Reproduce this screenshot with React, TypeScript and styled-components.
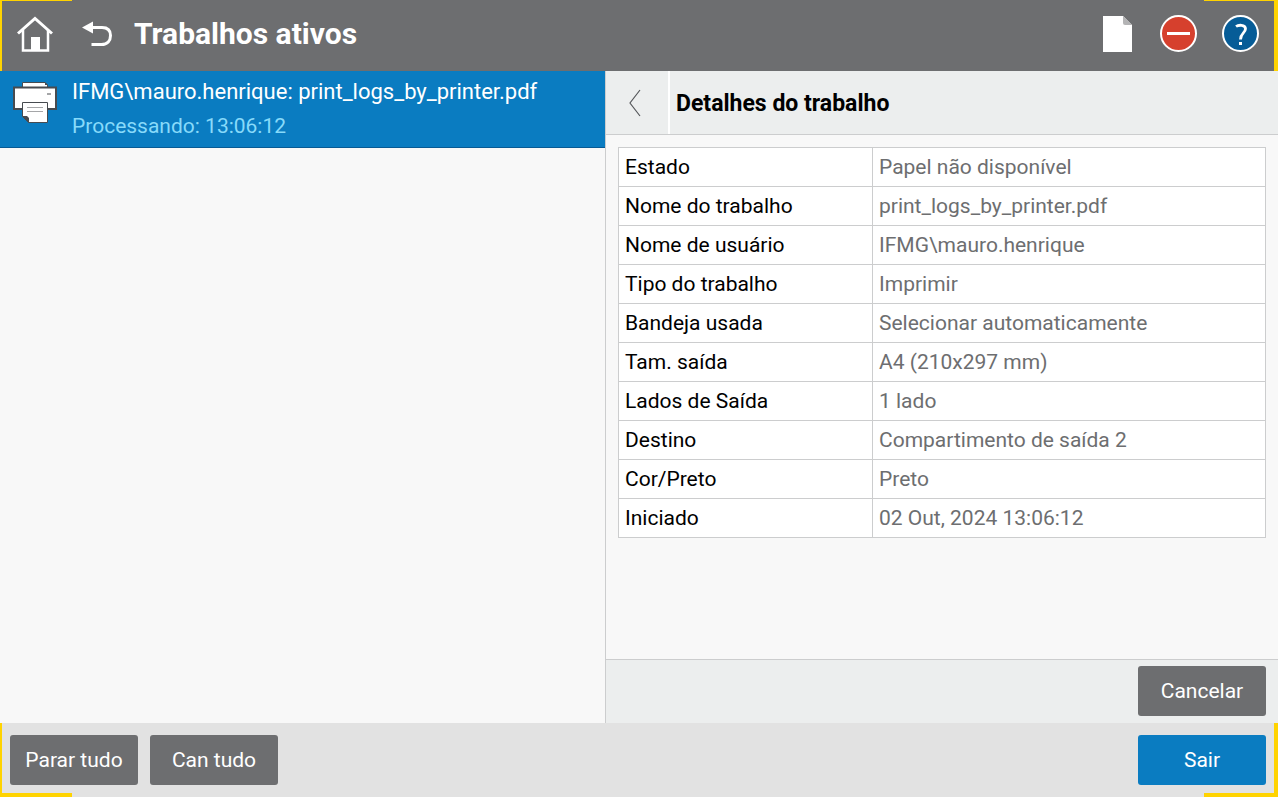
import React from "react";
import styled, { createGlobalStyle } from "styled-components";

const colors = {
  bar: "#6d6e70",
  blue: "#0a7cc1",
  blueDark: "#075a94",
  yellow: "#ffd300",
  panel: "#eceeee",
  page: "#f8f8f8",
  line: "#cccdce",
};

const GlobalStyle = createGlobalStyle`
  * { box-sizing: border-box; }
  body { margin: 0; }
  body, button { font-family: Roboto, "Noto Sans", sans-serif; font-size: 21px; font-weight: 400; }
`;

const Screen = styled.div`
  min-height: 100vh;
  display: flex;
  flex-direction: column;
  background: ${colors.page};
`;

const corner = `linear-gradient(${colors.yellow}, ${colors.yellow})`;

const Header = styled.header`
  display: flex;
  align-items: center;
  height: 71px;
  padding: 0 19px 4px 16px;
  color: #fff;
  background:
    ${corner} left top / 72px 1px no-repeat,
    ${corner} left top / 2px 100% no-repeat,
    ${corner} right top / 74px 1px no-repeat,
    ${corner} right top / 4px 100% no-repeat,
    ${colors.bar};
`;

const IconButton = styled.button<{ $gap?: number }>`
  display: flex;
  padding: 0;
  margin-left: ${(p) => p.$gap ?? 0}px;
  border: 0;
  background: none;
  color: inherit;
  cursor: pointer;
`;

const Title = styled.h1`
  flex: 1;
  margin: 0 0 0 20px;
  font-size: 30px;
  line-height: 40px;
  font-weight: 700;
`;

const Main = styled.main`
  flex: 1;
  display: grid;
  grid-template-columns: minmax(0, 605fr) minmax(0, 673fr);
`;

const JobList = styled.ul`
  margin: 0;
  padding: 0;
  list-style: none;
`;

const JobItem = styled.li`
  display: flex;
  gap: 14px;
  padding: 3px 13px;
  border-bottom: 1px solid ${colors.blueDark};
  background: ${colors.blue};
  color: #fff;
  line-height: 35px;
`;

const JobIcon = styled.div`
  padding-top: 7px;
  line-height: 0;
`;

const JobName = styled.div`
  font-size: 22px;
`;

const JobStatus = styled.div`
  color: #87dafa;
`;

const Details = styled.section`
  display: flex;
  flex-direction: column;
  border-left: 1px solid ${colors.line};
`;

const DetailsHeader = styled.div`
  display: flex;
  height: 64px;
  border-bottom: 1px solid ${colors.line};
  background: ${colors.panel};
`;

const CollapseButton = styled.button`
  display: flex;
  align-items: center;
  justify-content: center;
  width: 64px;
  padding: 0 4px 0 0;
  border: 0;
  border-right: 2px solid #fff;
  background: none;
  cursor: pointer;
`;

const DetailsTitle = styled.h2`
  margin: 0;
  padding: 2px 0 0 6px;
  font-size: 23px;
  line-height: 62px;
  font-weight: 700;
  color: #000;
`;

const DetailsBody = styled.div`
  flex: 1;
  padding: 12px;
`;

const Table = styled.table`
  width: 100%;
  border-collapse: collapse;
  table-layout: fixed;
  background: #fff;
  th, td {
    height: 39px;
    padding: 1px 6px 0;
    border: 1px solid ${colors.line};
    text-align: left;
    font-weight: 400;
    line-height: 37px;
  }
  th { width: 254px; color: #000; }
  td { color: #6d6e70; }
`;

const Actions = styled.div`
  display: flex;
  justify-content: flex-end;
  padding: 6px 12px 7px;
  border-top: 1px solid ${colors.line};
  background: ${colors.panel};
`;

const Footer = styled.footer`
  display: flex;
  gap: 12px;
  padding: 12px 12px 12px 10px;
  background:
    ${corner} left bottom / 72px 4px no-repeat,
    ${corner} left top / 2px 100% no-repeat,
    ${corner} right bottom / 74px 4px no-repeat,
    ${corner} right top / 4px 100% no-repeat,
    #e2e2e2;
`;

const Button = styled.button<{ $primary?: boolean; $end?: boolean }>`
  width: 128px;
  height: 50px;
  padding: 0;
  margin-left: ${(p) => (p.$end ? "auto" : "0")};
  border: 0;
  border-radius: 3px;
  background: ${(p) => (p.$primary ? colors.blue : colors.bar)};
  color: #fff;
  white-space: nowrap;
  cursor: pointer;
`;

const rows: [string, string][] = [
  ["Estado", "Papel não disponível"],
  ["Nome do trabalho", "print_logs_by_printer.pdf"],
  ["Nome de usuário", "IFMG\\mauro.henrique"],
  ["Tipo do trabalho", "Imprimir"],
  ["Bandeja usada", "Selecionar automaticamente"],
  ["Tam. saída", "A4 (210x297 mm)"],
  ["Lados de Saída", "1 lado"],
  ["Destino", "Compartimento de saída 2"],
  ["Cor/Preto", "Preto"],
  ["Iniciado", "02 Out, 2024 13:06:12"],
];

const HomeIcon = () => (
  <svg width="38" height="38" viewBox="0 0 38 38" fill="none" stroke="#fff">
    <path d="M2 18.500 L19 3.500 L36 18.500" strokeWidth="3" />
    <path d="M7 15 V35.500 H32 V15" strokeWidth="2.500" />
    <path d="M15 22 H24 V35 H15 Z" fill="#fff" stroke="none" />
  </svg>
);

const BackIcon = () => (
  <svg width="32" height="26" viewBox="0 0 32 26" fill="none">
    <path d="M0 6.5 L11 0.5 V12.5 Z" fill="#fff" />
    <path d="M10 6.5 H20 C26 6.5 28.5 10 28.5 14.5 C28.5 19.5 25.5 23.500 19.5 23.500 H9.500" stroke="#fff" strokeWidth="3" />
  </svg>
);

const PaperIcon = () => (
  <svg width="29" height="36" viewBox="0 0 29 36">
    <path d="M0 0 H20 L29 9 V36 H0 Z" fill="#fff" />
    <path d="M20 0 L29 9 H22 Q20 9 20 7 Z" fill="#b4b4b5" />
  </svg>
);

const StopIcon = () => (
  <svg width="37" height="37" viewBox="0 0 37 37">
    <circle cx="18.500" cy="18.500" r="17.500" fill="#d6402d" stroke="#fff" strokeWidth="2" />
    <path d="M7 17 H30 V20 H7 Z" fill="#fff" />
  </svg>
);

const HelpIcon = () => (
  <svg width="37" height="37" viewBox="0 0 37 37" fill="none">
    <circle cx="18.500" cy="18.500" r="17.500" fill="#065c97" stroke="#fff" strokeWidth="2" />
    <path d="M14 11.500 C16 10 23.500 9 23.500 13.800 C23.500 18 18.500 18 18.500 24.500" stroke="#fff" strokeWidth="2.800" />
    <path d="M17 27 H20 V30 H17 Z" fill="#fff" />
  </svg>
);

const PrinterIcon = () => (
  <svg width="45" height="42" viewBox="0 0 45 42">
    <path d="M9.500 6 V1.500 H32 L34.500 4 V6" fill="#fff" stroke="#474b50" />
    <path d="M32 1 V4 H35 Z" fill="#474b50" />
    <path d="M1 6.500 H43 V28 H1 Z" fill="#fff" stroke="#474b50" strokeWidth="2" />
    <path d="M34 12 H38 V14 H34 Z" fill="#a5a6a8" />
    <path d="M9.500 21.500 H34.500 V41.500 H15.500 L9.500 35.500 Z" fill="#fff" stroke="#474b50" />
    <path d="M9 35 H14 L16 37 V42 Z" fill="#474b50" />
    <path d="M14 26.500 H30 M14 30.500 H30" stroke="#a5a6a8" />
  </svg>
);

const ChevronIcon = () => (
  <svg width="12" height="28" viewBox="0 0 12 28" fill="none">
    <path d="M11 1 L1 14 L11 27" stroke="#55575a" strokeWidth="1.200" />
  </svg>
);

export default function App() {
  return (
    <Screen>
      <GlobalStyle />
      <Header>
        <IconButton aria-label="Início"><HomeIcon /></IconButton>
        <IconButton aria-label="Voltar" $gap={28}><BackIcon /></IconButton>
        <Title>Trabalhos ativos</Title>
        <IconButton aria-label="Papel"><PaperIcon /></IconButton>
        <IconButton aria-label="Parar" $gap={28}><StopIcon /></IconButton>
        <IconButton aria-label="Ajuda" $gap={25}><HelpIcon /></IconButton>
      </Header>
      <Main>
        <JobList>
          <JobItem>
            <JobIcon><PrinterIcon /></JobIcon>
            <div>
              <JobName>IFMG\mauro.henrique: print_logs_by_printer.pdf</JobName>
              <JobStatus>Processando: 13:06:12</JobStatus>
            </div>
          </JobItem>
        </JobList>
        <Details>
          <DetailsHeader>
            <CollapseButton aria-label="Recolher"><ChevronIcon /></CollapseButton>
            <DetailsTitle>Detalhes do trabalho</DetailsTitle>
          </DetailsHeader>
          <DetailsBody>
            <Table>
              <tbody>
                {rows.map(([label, value]) => (
                  <tr key={label}>
                    <th scope="row">{label}</th>
                    <td>{value}</td>
                  </tr>
                ))}
              </tbody>
            </Table>
          </DetailsBody>
          <Actions>
            <Button>Cancelar</Button>
          </Actions>
        </Details>
      </Main>
      <Footer>
        <Button>Parar tudo</Button>
        <Button>Can tudo</Button>
        <Button $primary $end>Sair</Button>
      </Footer>
    </Screen>
  );
}
